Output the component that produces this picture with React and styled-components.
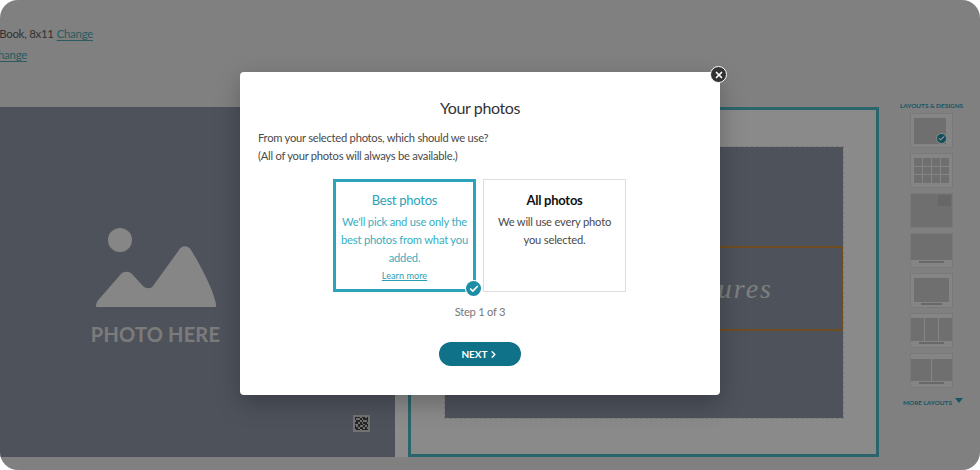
import React from "react";
import styled, { createGlobalStyle } from "styled-components";
import { Check, X, ChevronRight } from "lucide-react";

const Global = createGlobalStyle`
  html, body { margin: 0; padding: 0; background: #fff; }
  #root { width: 980px; height: 470px; }
  * { box-sizing: border-box; }
`;

const font = `"Lato", "Open Sans", sans-serif`;

const Screen = styled.div`
  position: relative;
  width: 980px;
  height: 470px;
  border-radius: 18px;
  overflow: hidden;
  background: #e9e9e9;
  font-family: ${font};
`;

const Page = styled.div`
  width: 100%;
  height: 100%;
  display: flex;
  flex-direction: column;
`;

const Header = styled.header`
  height: 107px;
  padding-top: 25px;
  display: flex;
  flex-direction: column;
  gap: 4px;
  flex: none;
`;

const InfoLine = styled.div`
  width: ${(p) => p.$end}px;
  height: 17px;
  display: flex;
  justify-content: flex-end;
  gap: 3px;
  white-space: nowrap;
  font-size: 11.4px;
  letter-spacing: -0.25px;
  line-height: 17px;
  color: #5c5c5c;
`;

const ChangeLink = styled.a`
  color: #4fa8b0;
  text-decoration: underline;
  text-underline-offset: 2px;
`;

const Editor = styled.main`
  height: 350px;
  display: flex;
  flex: none;
`;

const LeftPage = styled.section`
  width: 395px;
  flex: none;
  background: #8f96a6;
  position: relative;
  display: flex;
  flex-direction: column;
  align-items: center;
  padding-top: 121px;
`;

const PhotoIcon = styled.svg`
  width: 124px;
  height: 79px;
  margin-left: -84px;
  display: block;
`;

const PhotoLabel = styled.div`
  margin: 15px 0 0 -84px;
  font-size: 20px;
  line-height: 24px;
  font-weight: 700;
  letter-spacing: 0.2px;
  color: #e0e0e0;
`;

const QrCode = styled.svg`
  position: absolute;
  left: 353px;
  top: 308px;
  width: 17px;
  height: 17px;
`;

const Gutter = styled.div`
  width: 13px;
  flex: none;
  background: #fff;
`;

const SpreadFrame = styled.section`
  width: 471px;
  flex: none;
  border: 3px solid #4db8c4;
  background: #fbfbfb;
  padding: 37px 33px 36px 34px;
`;

const PhotoArea = styled.div`
  height: 271px;
  background: #8f96a6;
  outline: 1px dashed #e2e2e2;
  padding-top: 99px;
`;

const TitleBox = styled.div`
  height: 85px;
  border: 2px solid #c98a3c;
  display: flex;
  justify-content: flex-end;
  align-items: center;
  padding: 0 68px 0 0;
`;

const ScriptTitle = styled.span`
  font-family: "Liberation Serif", serif;
  font-style: italic;
  font-size: 28px;
  letter-spacing: 2px;
  color: #e4e6e8;
`;

const Sidebar = styled.aside`
  flex: 1;
  margin-top: -6px;
  padding-left: 21px;
  display: flex;
  flex-direction: column;
`;

const SideTitle = styled.div`
  font-size: 6.4px;
  line-height: 10px;
  font-weight: 700;
  white-space: nowrap;
  color: #2b9db8;
  margin-bottom: 2px;
`;

const ThumbList = styled.div`
  display: flex;
  flex-direction: column;
  gap: 5px;
  margin-left: 10px;
`;

const Thumb = styled.div`
  position: relative;
  width: 43px;
  height: 35px;
  border: 1px solid #dcdcdc;
  background: #f2f2f2;
  padding: ${(p) => p.$pad || "5px 3px"};
  display: grid;
  gap: 1px;
  grid-template-columns: ${(p) => p.$cols || "1fr"};
  grid-template-rows: ${(p) => p.$rows || "1fr"};
`;

const Cell = styled.div`
  background: #cacaca;
`;

const ThumbBar = styled.div`
  grid-column: 1 / -1;
  justify-self: center;
  width: 60%;
  background: #bdbdbd;
`;

const ThumbCorner = styled.div`
  position: absolute;
  top: 1px;
  right: 1px;
  width: 13px;
  height: 11px;
  background: #bcbcbc;
`;

const ThumbCheck = styled.span`
  position: absolute;
  right: 5px;
  bottom: 3px;
  width: 11px;
  height: 11px;
  border-radius: 50%;
  background: #1d8ea6;
  border: 1px solid #fff;
  display: flex;
  align-items: center;
  justify-content: center;
  color: #fff;
`;

const MoreLayouts = styled.div`
  margin: 10px 0 0 3px;
  display: flex;
  align-items: flex-start;
  gap: 3px;
  font-size: 6.4px;
  line-height: 10px;
  font-weight: 700;
  white-space: nowrap;
  color: #2b9db8;
`;

const Caret = styled.span`
  width: 0;
  height: 0;
  border-left: 4px solid transparent;
  border-right: 4px solid transparent;
  border-top: 5px solid #2b9db8;
`;

const Overlay = styled.div`
  position: absolute;
  inset: 0;
  background: rgba(0, 0, 0, 0.45);
  padding: 72px 0 0 240px;
`;

const Modal = styled.div`
  position: relative;
  width: 480px;
  height: 323px;
  background: #fff;
  border-radius: 4px;
  box-shadow: 0 8px 24px rgba(0, 0, 0, 0.25);
  padding: 26px 18px 0;
  display: flex;
  flex-direction: column;
  color: #444;
`;

const CloseButton = styled.button`
  position: absolute;
  top: -6px;
  right: -7px;
  width: 17px;
  height: 17px;
  padding: 0;
  border-radius: 50%;
  border: 1.5px solid #fff;
  background: #333;
  color: #fff;
  display: flex;
  align-items: center;
  justify-content: center;
`;

const ModalTitle = styled.h2`
  margin: 0;
  text-align: center;
  font-size: 16px;
  letter-spacing: -0.4px;
  line-height: 20px;
  font-weight: 400;
  color: #333;
`;

const Intro = styled.p`
  margin: 11px 0 0;
  font-size: 11.2px;
  letter-spacing: -0.25px;
  line-height: 18px;
  color: #4a4a4a;
`;

const Choices = styled.div`
  margin: 14px 0 0 75px;
  display: flex;
  gap: 7px;
`;

const Choice = styled.div`
  position: relative;
  width: 143px;
  height: 113px;
  padding: ${(p) => (p.$selected ? "8px 2px 0" : "10px 4px 0")};
  border: ${(p) => (p.$selected ? "3px solid #2ba3b8" : "1px solid #ddd")};
  text-align: center;
  color: ${(p) => (p.$selected ? "#3aaec0" : "#4a4a4a")};
  font-size: 11.2px;
  letter-spacing: -0.2px;
  line-height: 18px;
`;

const ChoiceTitle = styled.div`
  font-size: 13px;
  letter-spacing: -0.25px;
  line-height: 20px;
  margin-bottom: 3px;
  font-weight: ${(p) => (p.$selected ? 400 : 700)};
  color: ${(p) => (p.$selected ? "#2ba3b8" : "#111")};
`;

const LearnMore = styled.a`
  display: block;
  font-size: 9.2px;
  letter-spacing: 0;
  line-height: 17px;
  color: #2b9fb8;
  text-decoration: underline;
`;

const SelectedBadge = styled.span`
  position: absolute;
  right: -8px;
  bottom: -7px;
  width: 15px;
  height: 15px;
  border-radius: 50%;
  background: #1f8ca6;
  box-shadow: 0 0 0 1px #fff;
  color: #fff;
  display: flex;
  align-items: center;
  justify-content: center;
`;

const StepText = styled.div`
  margin-top: 11px;
  text-align: center;
  font-size: 11.2px;
  letter-spacing: -0.25px;
  line-height: 18px;
  color: #777;
`;

const NextButton = styled.button`
  align-self: center;
  margin: 21px 0 0 0;
  width: 82px;
  height: 24px;
  border: 0;
  border-radius: 12px;
  background: #0f7288;
  color: #fff;
  font-family: ${font};
  font-size: 10px;
  font-weight: 700;
  display: flex;
  align-items: center;
  justify-content: center;
  gap: 0;
`;

const qrCells = [
  "11101101","10010111","01101001","11010110","00111011","10100101","11011010","01101111",
];

const thumbs = [
  { pad: "4px 6px 3px 3px", cols: "1fr", rows: "1fr", cells: 1, check: true },
  { pad: "4px 3px", cols: "repeat(4, 1fr)", rows: "repeat(3, 1fr)", cells: 12 },
  { pad: "0", cols: "1fr", rows: "1fr", cells: 1, corner: true },
  { pad: "0 0 4px", cols: "1fr", rows: "1fr 2px", cells: 1, bar: true },
  { pad: "4px 3px 2px", cols: "1fr", rows: "1fr 2px", cells: 1, bar: true },
  { pad: "4px 0 3px", cols: "repeat(3, 1fr)", rows: "1fr 2px", cells: 3, bar: true },
  { pad: "5px 0 3px", cols: "1fr 1fr", rows: "1fr 2px", cells: 2, bar: true },
];

export default function App() {
  return (
    <Screen>
      <Global />
      <Page>
        <Header>
          <InfoLine $end={93}>
            <span>Photo Book, 8x11</span>
            <ChangeLink>Change</ChangeLink>
          </InfoLine>
          <InfoLine $end={27}>
            <ChangeLink>Change</ChangeLink>
          </InfoLine>
        </Header>
        <Editor>
          <LeftPage>
            <PhotoIcon viewBox="0 0 124 79">
              <circle cx="26" cy="12" r="12" fill="#f4f4f4" />
              <path
                d="M2 79 C2 75 3 73 6 70 L27 46 C30 43 35 43 38 46 L49 58 C52 61 57 61 59 58 L85 22 C88 17 94 17 97 22 C108 40 118 60 121 72 C122 75 122 77 122 79 Z"
                fill="#f4f4f4"
              />
            </PhotoIcon>
            <PhotoLabel>PHOTO HERE</PhotoLabel>
            <QrCode viewBox="0 0 10 10" shapeRendering="crispEdges">
              <rect width="10" height="10" fill="#d0d0d0" />
              {qrCells.map((row, y) =>
                row.split("").map((c, x) =>
                  c === "1" ? <rect key={`${x}-${y}`} x={x + 1} y={y + 1} width="1" height="1" fill="#444" /> : null
                )
              )}
            </QrCode>
          </LeftPage>
          <Gutter />
          <SpreadFrame>
            <PhotoArea>
              <TitleBox>
                <ScriptTitle>Our Pictures</ScriptTitle>
              </TitleBox>
            </PhotoArea>
          </SpreadFrame>
          <Sidebar>
            <SideTitle>LAYOUTS &amp; DESIGNS</SideTitle>
            <ThumbList>
              {thumbs.map((t, i) => (
                <Thumb key={i} $pad={t.pad} $cols={t.cols} $rows={t.rows}>
                  {Array.from({ length: t.cells }).map((_, j) => (
                    <Cell key={j} />
                  ))}
                  {t.bar && <ThumbBar />}
                  {t.corner && <ThumbCorner />}
                  {t.check && (
                    <ThumbCheck>
                      <Check size={7} strokeWidth={4} />
                    </ThumbCheck>
                  )}
                </Thumb>
              ))}
            </ThumbList>
            <MoreLayouts>
              MORE LAYOUTS <Caret />
            </MoreLayouts>
          </Sidebar>
        </Editor>
      </Page>
      <Overlay>
        <Modal>
          <CloseButton aria-label="Close">
            <X size={10} strokeWidth={4} />
          </CloseButton>
          <ModalTitle>Your photos</ModalTitle>
          <Intro>
            From your selected photos, which should we use?
            <br />
            (All of your photos will always be available.)
          </Intro>
          <Choices>
            <Choice $selected>
              <ChoiceTitle $selected>Best photos</ChoiceTitle>
              We'll pick and use only the best photos from what you added.
              <LearnMore>Learn more</LearnMore>
              <SelectedBadge>
                <Check size={10} strokeWidth={4} />
              </SelectedBadge>
            </Choice>
            <Choice>
              <ChoiceTitle>All photos</ChoiceTitle>
              We will use every photo
              <br />
              you selected.
            </Choice>
          </Choices>
          <StepText>Step 1 of 3</StepText>
          <NextButton>
            NEXT <ChevronRight size={11} strokeWidth={3} />
          </NextButton>
        </Modal>
      </Overlay>
    </Screen>
  );
}
